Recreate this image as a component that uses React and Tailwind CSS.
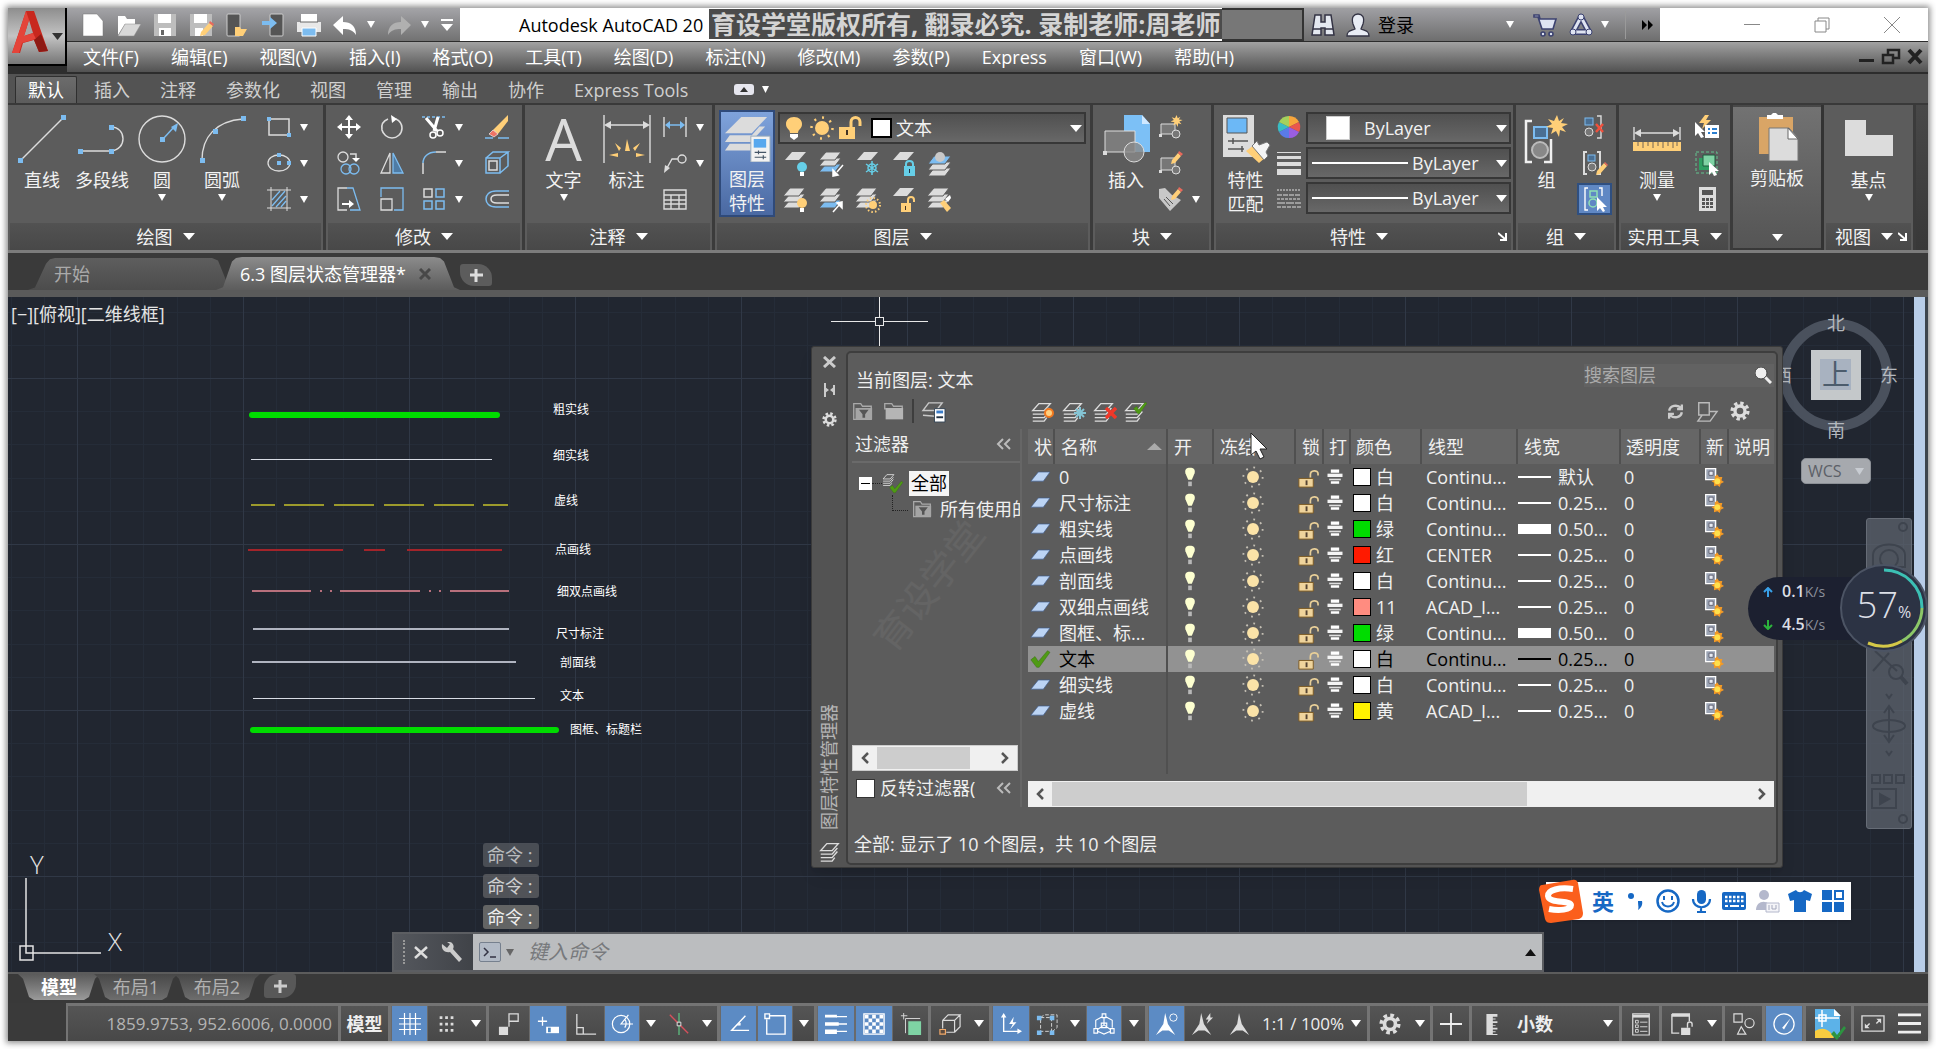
import { useState } from "react";

const W = "#dcdcdc";
const B = "#7cbcf0";
const Y = "#ffcf78";

const sheet = "M9 0h14l-7 8H2z";
const sheets = (
  <g fill={W} stroke="#5c5c5c">
    <path d="M7 12h15l-6 8H0z" />
    <path d="M7 6h15l-6 8H0z" />
    <path d="M7 0h15l-6 8H0z" />
  </g>
);
const sheetsBlue = (
  <g fill={W} stroke="#5c5c5c">
    <path d="M7 12h15l-6 8H0z" fill={B} />
    <path d="M7 6h15l-6 8H0z" />
    <path d="M7 0h15l-6 8H0z" />
  </g>
);
const bracketPair = (
  <>
    <path d="M4 1H1v22h3M14 1h3v22h-3" fill="none" stroke={W} strokeWidth="2" />
    <rect x="5" y="4" width="7" height="6" fill="#4a6f93" stroke={B} />
    <circle cx="9" cy="16" r="4" fill="#777" stroke={W} />
  </>
);
const pencil = (
  <g transform="translate(11 0)">
    <path d="M2 9l6-7 3 3-6 7-4 1z" fill={Y} />
    <path d="M8 2l1-2 4 3-2 2z" fill="#e8695c" />
  </g>
);
const burst = "M12 0l2 6 5-3-3 5 7 1-6 3 4 5-6-2-1 7-3-6-5 3 2-6-7-1 6-3-4-5 6 2z";

const art = {
  // quick access
  newFile: <path d="M2 1h14l6 7v15H2z" fill="#fff" stroke="#777" strokeWidth=".5" />,
  open: <><path d="M1 3h7l2 3h8v5L8 11 1 22z" fill="#fff" /><path d="M8 11h16l-7 12H1z" fill="#d8d8d8" stroke="#8a8a8a" strokeWidth=".5" /></>,
  save: <><path d="M1 1h22v22H1z" fill="#bdbdbd" /><path d="M5 1h13v9H5zM6 15h12v8H6z" fill="#fff" /><path d="M8 17h3v5H8z" fill="#666" /></>,
  saveAs: <><path d="M1 1h22v22H1z" fill="#bdbdbd" /><path d="M5 1h13v9H5zM6 15h8v8H6z" fill="#fff" /><path d="M12 19l8-9 4 3-8 9-5 1z" fill={Y} /><path d="M20 10l1-2 4 3-1 2z" fill="#e8695c" /></>,
  openMobile: <><rect x="2" y="1" width="13" height="22" rx="1" fill="#555" stroke="#ccc" /><path d="M10 14h5l1 2h6l-4 7h-8z" fill={Y} /></>,
  saveMobile: <><rect x="9" y="1" width="13" height="22" rx="1" fill="#555" stroke="#ccc" /><path d="M1 8h8V4l7 6-7 6v-4H1z" fill={B} /></>,
  print: <><path d="M4 1h16v8H4z" fill="#fff" /><path d="M0 9h24v10H0z" fill="#e8e8e8" /><path d="M3 9h18" stroke="#666" /><path d="M5 15h14v8H5z" fill={B} stroke="#fff" /></>,
  undo: <path d="M0 12l10-9v6c8 0 13 4 13 13-3-5-7-6-13-6v6z" fill="#fff" />,
  redo: <path d="M24 12L14 3v6C6 9 1 13 1 22c3-5 7-6 13-6v6z" fill="#b0b0b0" />,
  binoculars: <g fill="#e4e8f0" stroke="#334" strokeWidth="1.5"><path d="M4 2h6v7h4V2h6l3 20h-9v-7h-4v7H1z" /><path d="M2 16h8M14 16h8" /></g>,
  user: <g fill="#e8ecf4" stroke="#334" strokeWidth="1.3"><path d="M1 23c0-5 3-5 8-7l-2-5C5 4 8 1 12 1s7 3 5 10l-2 5c5 2 8 2 8 7z" /></g>,
  cart: <g fill="#dfe4f2" stroke="#3c4270" strokeWidth="1.6"><path d="M1 2h5l1 4h16l-3 10H9L5 4H1z" /><circle cx="10" cy="21" r="2" /><circle cx="18" cy="21" r="2" /></g>,
  app360: <g fill="none" stroke="#3c4270"><path d="M12 4l8 15H4z" strokeWidth="6" strokeLinejoin="round" /><path d="M12 4l8 15H4z" stroke="#dfe4f2" strokeWidth="3" strokeLinejoin="round" /><circle cx="12" cy="4" r="3" fill="#dfe4f2" /><circle cx="4" cy="19" r="3" fill="#dfe4f2" /><circle cx="20" cy="19" r="3" fill="#dfe4f2" /></g>,
  // draw
  rect: <><path d="M2 4h20v16H2z" fill="none" stroke={W} strokeWidth="1.5" /><path d="M0 2h4v4H0zM20 18h4v4h-4z" fill={B} /></>,
  ellipse: <><ellipse cx="12" cy="12" rx="11" ry="8" fill="none" stroke={W} strokeWidth="1.3" /><path d="M10 2h4v4h-4zM10 10h4v4h-4zM20 10h4v4h-4z" fill={B} /></>,
  hatch: <><path d="M5 13l8-9M5 19L18 4M9 20L19 9M14 20l5-6" stroke={B} strokeWidth="1.3" /><path d="M0 3h24M0 21h24M4 0v24M20 0v24" stroke={W} /></>,
  // modify
  move: <path d="M12 0l4 5h-3v6h6V8l5 4-5 4v-3h-6v6h3l-4 5-4-5h3v-6H5v3l-5-4 5-4v3h6V5H8z" fill="#fff" />,
  rotate: <><path d="M8 4C3 6 1 10 2 15c1 4 5 8 10 8s10-4 10-10c0-4-2-7-6-9" fill="none" stroke={W} strokeWidth="1.6" /><path d="M11 0l6 4-5 4z" fill="#fff" /></>,
  trim: <><path d="M0 2h24" stroke={B} strokeWidth="1.5" strokeDasharray="3 2" /><path d="M4 3l11 13M16 2l-4 14" stroke="#fff" strokeWidth="3" /><circle cx="11" cy="20" r="3" fill="none" stroke="#fff" strokeWidth="1.5" /><circle cx="18" cy="18" r="3" fill="none" stroke="#fff" strokeWidth="1.5" /></>,
  erase: <><path d="M23 0L8 15l5 4L23 6z" fill={Y} /><path d="M8 15l5 4-4 3-5-3z" fill="#ef7466" stroke="#fff" strokeWidth=".6" /><path d="M0 23h8M13 23h11" stroke={B} strokeWidth="1.5" /></>,
  copy: <><circle cx="6" cy="6" r="5" fill="none" stroke={W} strokeWidth="1.3" /><path d="M13 3h6v5" fill="none" stroke={W} strokeWidth="1.5" /><path d="M15 7h8l-4 4z" fill="#fff" /><circle cx="9" cy="18" r="5" fill="none" stroke={B} strokeWidth="1.3" /><circle cx="17" cy="18" r="5" fill="none" stroke={B} strokeWidth="1.3" /></>,
  mirror: <><path d="M10 2v20H1z" fill="none" stroke={W} strokeWidth="1.3" /><path d="M13 2v20h10z" fill="#4f7ca5" stroke={B} strokeWidth="1.3" /></>,
  fillet: <><path d="M1 23V12" stroke={W} strokeWidth="1.5" /><path d="M1 12C1 6 6 1 14 1" fill="none" stroke={B} strokeWidth="1.5" /><path d="M14 1h10" stroke={W} strokeWidth="1.5" /></>,
  explode: <><path d="M1 7h14v15H1zM1 7l7-6h15l-8 6M23 1v14l-8 7" fill="none" stroke={B} strokeWidth="1.5" /><path d="M4 10h8v9H4z" fill="none" stroke={W} strokeWidth="1.5" /></>,
  stretch: <><path d="M10 1H1v22h9" fill="none" stroke={W} strokeWidth="1.3" /><path d="M10 1h6l7 22H13" fill="none" stroke={B} strokeWidth="1.3" /><path d="M5 17h7" stroke="#fff" strokeWidth="2" /><path d="M12 13l5 4-5 4z" fill="#fff" /></>,
  scale: <><path d="M1 10V1h22v22H14" fill="none" stroke={B} strokeWidth="1.3" /><path d="M1 12h11v11H1z" fill="none" stroke={W} strokeWidth="1.3" /></>,
  array: <><path d="M2 2h8v8H2z" fill="none" stroke={W} strokeWidth="1.5" /><path d="M14 2h8v8h-8zM2 14h8v8H2zM14 14h8v8h-8z" fill="none" stroke={B} strokeWidth="1.5" /></>,
  offset: <><path d="M24 4H11C4 4 1 8 1 12s3 8 10 8h13" fill="none" stroke={B} strokeWidth="1.5" /><path d="M24 8H12c-4 0-6 2-6 4s2 4 6 4h12" fill="none" stroke={W} strokeWidth="1.5" /></>,
  // annotate
  dimLinear: <><path d="M1 2v20M23 2v20" stroke={W} strokeWidth="1.4" /><path d="M4 10h16" stroke={B} strokeWidth="1.5" /><path d="M2 10l5-4v8zM22 10l-5-4v8z" fill={B} /></>,
  leader: <><circle cx="19" cy="8" r="4" fill="none" stroke={W} strokeWidth="1.4" /><path d="M15 8h-6l-5 9" fill="none" stroke={W} strokeWidth="1.4" /><path d="M1 22l1-8 5 3z" fill={W} /></>,
  table: <path d="M1 3h22v19H1zM1 8h22M1 13h22M1 17h22M8 8v14M16 8v14" fill="none" stroke={W} strokeWidth="1.4" />,
  // layers
  layOff: <><path d={sheet} fill={W} /><circle cx="19" cy="15" r="5" fill="#66cfe8" /><path d="M17 20h4v4h-4z" fill="#fff" /></>,
  layIso: <>{sheetsBlue}<path d="M24 13l-6 7M14 24v-6l5 5z" stroke="#fff" strokeWidth="1.5" fill="#fff" /></>,
  layFreeze: <><path d={sheet} fill={W} /><path d="M17 9v14M11 12l12 8M23 12l-12 8" stroke="#66cfe8" strokeWidth="1.5" /><circle cx="17" cy="16" r="4" fill="none" stroke="#66cfe8" strokeWidth="1.5" /></>,
  layLock: <><path d={sheet} fill={W} /><path d="M13 14h11v10H13z" fill="#66cfe8" /><path d="M15 14v-2c0-4 7-4 7 0v2" fill="none" stroke="#66cfe8" strokeWidth="2" /><path d="M18 17h1v4h-1z" fill="#234" /></>,
  laySet: <><path d="M7 16h17l-6 8H1z" fill={W} stroke="#5c5c5c" /><path d="M7 10h17l-6 8H1z" fill={W} stroke="#5c5c5c" /><path d="M7 4h17l-6 8H1z" fill={B} stroke="#5c5c5c" /><circle cx="13" cy="5" r="5" fill="#c8c8c8" /></>,
  layOn: <>{sheets}<circle cx="19" cy="15" r="5" fill={Y} /><path d="M17 20h4v4h-4z" fill="#fff" /></>,
  layUniso: <>{sheetsBlue}<path d="M14 24l7-8M23 14v6l-5-5z" stroke="#fff" strokeWidth="1.5" fill="#fff" /></>,
  layThaw: <>{sheets}<circle cx="18" cy="17" r="7" fill="none" stroke={Y} strokeWidth="2" strokeDasharray="1.5 2.2" /><circle cx="18" cy="17" r="4" fill={Y} /></>,
  layUnlock: <><path d={sheet} fill={W} /><path d="M10 15h10v9H10z" fill={Y} /><path d="M17 15v-3c0-4 6-4 6 0v2" fill="none" stroke={Y} strokeWidth="2" /><path d="M14 18h1v4h-1z" fill="#432" /></>,
  layMatch: <>{sheets}<path d="M13 15l4-3 7 8-4 4z" fill={Y} /><path d="M18 11l5-4 1 3-3 4z" fill="#fff" /></>,
  bulb: <><path d="M12 1c5 0 8 3 8 7 0 5-4 5-4 9H8c0-4-4-4-4-9 0-4 3-7 8-7z" fill={Y} /><path d="M8 18h8v3l-4 3-4-3z" fill="#fff" /></>,
  sun: <><circle cx="12" cy="12" r="7" fill={Y} /><circle cx="12" cy="12" r="10.500" fill="none" stroke={Y} strokeWidth="2.500" strokeDasharray="2 6.200" /></>,
  unlock: <><path d="M1 11h16v12H1z" fill={Y} /><path d="M13 11V6c0-6 9-6 9 0v4" fill="none" stroke={Y} strokeWidth="3" /><path d="M8 14h2v5H8z" fill="#432" /></>,
  // block
  blkNew: <><path d="M2 9h14v10H2z" fill="#777" stroke={W} /><circle cx="17" cy="19" r="4" fill="#777" stroke={W} /><path d="M0 19h3v3H0z" fill={W} /><g transform="translate(11 0) scale(.55)"><path d={burst} fill={Y} /></g></>,
  blkEdit: <><path d="M2 7h14v12H2z" fill="#777" stroke={W} /><circle cx="17" cy="19" r="4" fill="#777" stroke={W} /><path d="M0 19h3v3H0z" fill={W} />{pencil}</>,
  tag: <><path d="M0 2l6-1 7 7 9 5-11 11L0 11z" fill="#c8c8c8" /><path d="M7 10l7 7M5 12l6 7" stroke="#555" />{pencil}</>,
  wheel: <><path d="M12 12V1a11 11 0 0 1 10 6z" fill="#f7a63c" /><path d="M12 12l10-5a11 11 0 0 1 0 10z" fill="#e9574d" /><path d="M12 12l10 5a11 11 0 0 1-10 6z" fill="#9a5ee0" /><path d="M12 12v11a11 11 0 0 1-10-6z" fill="#5a7be8" /><path d="M12 12L2 17a11 11 0 0 1 0-10z" fill="#38bcc4" /><path d="M12 12L2 7a11 11 0 0 1 10-6z" fill="#a4d15c" /></>,
  weights: <path d="M0 1h24v1H0zM0 5h24v3H0zM0 11h24v4H0zM0 18h24v6H0z" fill={W} />,
  dashes: <g stroke={W} strokeWidth="1.200"><path d="M0 3h24" strokeDasharray="2 1" /><path d="M0 8h24" strokeDasharray="5 1" /><path d="M0 12h24" strokeDasharray="3 1" /><path d="M0 16h24" strokeDasharray="8 1" /><path d="M0 20h24" strokeDasharray="4 1" /></g>,
  // groups
  ungroup: <><path d="M14 1h4v22h-4" fill="none" stroke={W} strokeWidth="1.400" /><rect x="2" y="3" width="8" height="7" fill="#4a6f93" stroke={B} /><circle cx="6" cy="17" r="4" fill="#777" stroke={W} /><path d="M13 9l7 8M20 9l-7 8" stroke="#f0503c" strokeWidth="2.500" /></>,
  groupEdit: <>{bracketPair}<path d="M13 24l1-4 7-8 3 3-7 8z" fill={Y} /><path d="M21 12l1-1 3 3-1 1z" fill="#e8695c" /></>,
  groupSel: <><path d="M5 1H2v22h3M16 1h3v8" fill="none" stroke="#fff" strokeWidth="1.400" /><rect x="7" y="4" width="7" height="6" fill="none" stroke="#8fe0b4" strokeWidth="1.500" /><circle cx="10" cy="16" r="4" fill="none" stroke="#8fe0b4" strokeWidth="1.500" /><path d="M14 10v14l3-3 3 4 2-1-2-4h4z" fill="#fff" /></>,
  quick: <><path d="M10 0L4 8h5l-2 6 9-9h-5l3-5z" fill={Y} /><path d="M10 10h14v13H10z" fill="#fff" /><path d="M13 13h2v2h-2zM13 17h2v2h-2zM17 13h5v2h-5zM17 17h5v2h-5z" fill="#2b7fd0" /><path d="M0 7v14l3-3 3 5 3-1-3-5h4z" fill="#fff" /></>,
  selAll: <><path d="M1 1h21v21H1z" fill="none" stroke="#63c58f" strokeDasharray="3 2" /><path d="M4 7h12v12H4z" fill="#2f9f62" /><path d="M8 4h12v11H8z" fill="#7fd3a4" stroke="#1f5a3c" /><path d="M14 11v13l3-3 2 4 3-1-2-4h4z" fill="#fff" /></>,
  calc: <><path d="M4 0h17v24H4z" fill={W} /><path d="M7 3h11v5H7z" fill="#555" /><path d="M7 11h3v3H7zM11 11h3v3h-3zM15 11h3v3h-3zM7 15h3v3H7zM11 15h3v3h-3zM15 15h3v3h-3zM7 19h3v2H7zM11 19h3v2h-3zM15 19h3v2h-3z" fill="#555" /></>,
  // palette
  folder: <><path d="M2 3h8l2 3h10v3H2z" fill="none" stroke="#aaa" strokeWidth="1.500" /><path d="M3 8h20v13H3z" fill="#b5b5b5" /></>,
  folderFilter: <><path d="M2 3h8l2 3h10v15H2z" fill="none" stroke="#aaa" strokeWidth="1.500" /><path d="M4 8h19v13H4z" fill="#a5a5a5" /><path d="M8 10h11l-4 5v4h-3v-4z" fill="#555" /></>,
  layState: <><path d="M7 3h14l-6 8H1zM1 16l13 1 4-4" fill="none" stroke="#c8c8c8" strokeWidth="1.500" /><path d="M13 9h11v14H13z" fill="#fff" stroke="#345" /><path d="M15 11h7v3h-7z" fill="#3a7cc8" /><path d="M15 18h7" stroke="#234" strokeWidth="2" /></>,
  stackLines: <g fill="none" stroke="#ddd" strokeWidth="1.600"><path d="M9 3h13l-7 8H2zM2 15h13l6-7M2 19h13l6-7M2 23h13l3-4" /></g>,
  refresh: <path d="M4 11c1-6 10-9 15-3M20 3v6h-6M20 13c-1 6-10 9-15 3M4 21v-6h6" fill="none" stroke="#ccc" strokeWidth="3" />,
  override: <path d="M2 2h12v14H2zM14 12h9l-8 11H1l5-7" fill="none" stroke="#bbb" strokeWidth="1.600" />,
  gear: <><circle cx="12" cy="12" r="6" fill="none" stroke="#ddd" strokeWidth="4" /><circle cx="12" cy="12" r="9.500" fill="none" stroke="#ddd" strokeWidth="4" strokeDasharray="4 3.460" /></>,
  // row glyphs
  layerRow: <path d="M10 6h14l-8 11H1z" fill="#bcd4f4" stroke="#3c5a8c" strokeWidth=".8" />,
  check: <path d="M1 13l5-4 4 6L21 2l3 2-13 18H8z" fill="#4f9a14" stroke="#2f640a" strokeWidth=".5" />,
  rowBulb: <><path d="M12 2c4 0 6 2 5 6l-3 7h-4L7 8c-1-4 1-6 5-6z" fill="#fdffd0" /><path d="M10 17h4v5h-4z" fill="#b8b8b8" /></>,
  rowSun: <><circle cx="12" cy="12" r="6.500" fill="#fbe3a8" /><circle cx="12" cy="12" r="10.500" fill="none" stroke="#c4bfb4" strokeWidth="2" strokeDasharray="2 6.250" /></>,
  rowLock: <><path d="M3 13h15v9H3z" fill="#efd49c" stroke="#7c5a24" /><path d="M15 12V9c0-5 8-5 8-1v2" fill="none" stroke="#e8cf98" strokeWidth="1.800" /><path d="M10 15h2v5h-2z" fill="#543" /></>,
  rowPrint: <><path d="M7 3h10v4H7zM7 17h10v3H7z" fill="#fff" /><path d="M3 8h18v4H3z" fill="#f4f4f4" /><path d="M5 14h14v2H5z" fill="#ddd" /></>,
  rowVp: <><path d="M2 2h12v13H2z" fill="#9ba4b4" stroke="#fff" strokeWidth="1.500" /><path d="M6 5h5v5H6z" fill="#e8ecf4" stroke="#556" /><path d="M16 9l2 3 4 0-1 4 3 2-4 2-1 4-3-2-4 1 0-4-3-2 4-2 0-4z" fill="#f39a26" /><circle cx="16" cy="17" r="3.500" fill="#ffe04c" /></>,
  // status bar
  grid: <path d="M6 0v24M12 0v24M18 0v24M0 6h24M0 12h24M0 18h24" stroke="#fff" strokeWidth="1.300" />,
  dots: <path d="M4 5h15M4 12h15M4 19h15" stroke={W} strokeWidth="3" strokeDasharray="3 3" />,
  infer: <><path d="M1 15h10v9H1z" fill={W} /><path d="M12 1h10v8H12zM12 9v6" fill="none" stroke={W} strokeWidth="1.400" /></>,
  dyn: <><path d="M6 4v10M1 9h10" stroke="#fff" strokeWidth="1.400" /><path d="M10 15h14v7H10z" fill="#fff" /><path d="M12 16h3v5h-3z" fill="#4d86c0" /></>,
  ortho: <path d="M2 1v22h21M2 16h7v7" fill="none" stroke={W} strokeWidth="1.400" />,
  polar: <><circle cx="11" cy="12" r="9.500" fill="none" stroke="#fff" strokeWidth="1.300" /><path d="M19 2l-8 10h13M15 7c2 2 2 6 0 9" fill="none" stroke="#fff" strokeWidth="1.300" /></>,
  iso: <><path d="M2 2l20 20" stroke="#d8505c" strokeWidth="1.500" /><path d="M12 0v24" stroke="#5cb87c" strokeWidth="1.500" /><path d="M10 10h4v4h-4z" fill="#444" stroke="#eee" /></>,
  track: <path d="M19 3L4 19h19M9 13h4v-2" fill="none" stroke="#fff" strokeWidth="1.500" />,
  osnap: <path d="M6 3h17v20H3V7M1 1h5v5H1z" fill="none" stroke="#fff" strokeWidth="1.500" />,
  lwt: <><path d="M12 4h12M12 12h12M12 20h12" stroke="#fff" strokeWidth="1.500" /><path d="M0 2h13v3H0zM0 10h15v4H0zM0 18h13v5H0z" fill="#fff" /></>,
  checker: <><path d="M1 1h22v22H1z" fill="none" stroke="#fff" strokeWidth="1.500" /><path d="M2 2h4v4H2zM10 2h4v4h-4zM18 2h4v4h-4zM6 6h4v4H6zM14 6h4v4h-4zM2 10h4v4H2zM10 10h4v4h-4zM18 10h4v4h-4zM6 14h4v4H6zM14 14h4v4h-4zM2 18h4v4H2zM10 18h4v4h-4zM18 18h4v4h-4z" fill="#fff" /></>,
  cycle: <><path d="M4 0v7M1 3h7M6 22V6h16" fill="none" stroke={W} /><path d="M9 9h14v15H9z" fill="#7fd3a4" /></>,
  cube3: <><path d="M4 8h13v13H8M4 8v9M4 8l6-6h13l-6 6M23 2v13l-6 6" fill="none" stroke={W} strokeWidth="1.300" /><path d="M1 18h6v5H1z" fill="#5a4a3e" stroke="#f0a868" strokeWidth="1.300" /></>,
  ucs: <><path d="M4 2v18h18" fill="none" stroke="#fff" strokeWidth="1.500" /><path d="M1 5l3-5 3 5zM19 17l5 3-5 3zM15 4l-5 8h4l-3 6 7-8h-4z" fill="#fff" /></>,
  subobj: <><path d="M5 5h12v15H5zM5 5l4-3h14v14l-5 4" fill="none" stroke={W} strokeDasharray="4 2" /><path d="M1 3h5v5H1zM15 3h5v5h-5zM1 19h5v5H1zM15 19h5v5h-5z" fill={B} /></>,
  gizmo: <path d="M10 1h4v4h-4zM1 17h4v5H1zM19 17h4v5h-4zM12 5v8M12 13l-7 5M12 13l7 5M3 16V8l7-4M21 16V8l-7-4M5 20l7 3 7-3M9 11h6v5H9z" fill="none" stroke="#fff" strokeWidth="1.200" />,
  annoA: <><path d="M10 0l3 12 8 12-7-5H7l-7 5 8-12z" fill="#fff" /><circle cx="19" cy="5" r="4" fill="none" stroke="#fff" /></>,
  annoB: <><path d="M10 0l3 12 8 12-7-5H7l-7 5 8-12z" fill={W} /><path d="M20 0l-5 7h3l-2 5 7-7h-3z" fill={W} /></>,
  annoC: <path d="M12 0l3 12 8 12-7-5H9l-7 5 8-12z" fill={W} />,
  plus: <path d="M12 0v24M0 12h24" stroke="#eee" strokeWidth="2" />,
  ruler: <path d="M7 1h12v3h-5v2h3v1h-3v2h5v2h-5v2h3v1h-3v2h5v2h-5v2h3v1h-3v2h5v1H7z" fill={W} />,
  list: <><path d="M3 1h18v23H3z" fill="none" stroke={W} strokeWidth="1.300" /><path d="M3 2h18v3H3z" fill={W} /><path d="M6 8h3v3H6zM6 13h3v3H6zM6 18h3v3H6zM11 10h8M11 15h8M11 20h8" fill="none" stroke={W} /></>,
  winLock: <><path d="M1 1h19v8M1 1v21h8" fill="none" stroke={W} strokeWidth="1.500" /><path d="M1 1h19v3H1zM11 16h10v8H11z" fill={W} /><path d="M18 16v-4c0-3 5-3 5 0v3" fill="none" stroke={W} strokeWidth="1.500" /></>,
  shapes: <><path d="M1 1h9v9H1zM9 15l5 8H5z" fill="none" stroke={W} strokeWidth="1.300" /><circle cx="18" cy="11" r="5" fill="none" stroke={W} strokeWidth="1.300" /></>,
  gauge: <><circle cx="12" cy="12" r="11" fill="none" stroke="#fff" strokeWidth="1.400" /><path d="M19 6l-7 12-2-2z" fill="#fff" /></>,
  full: <><path d="M1 4h23v16H1z" fill="none" stroke={W} strokeWidth="1.400" /><path d="M16 7h5v5zM4 12v5h5z" fill={W} /><path d="M20 8l-4 4M5 16l4-4" stroke={W} strokeWidth="1.500" /></>,
  menu: <path d="M0 3h24M0 12h24M0 21h24" stroke="#eee" strokeWidth="3" />,
  // ime
  smile: <><circle cx="12" cy="12" r="10.500" fill="none" stroke="#1668c4" strokeWidth="2.500" /><path d="M8 7v4M16 7v4" stroke="#1668c4" strokeWidth="2" /><path d="M6 13c2 6 10 6 12 0" fill="none" stroke="#1668c4" strokeWidth="2" /></>,
  mic: <><rect x="8" y="1" width="9" height="14" rx="4.500" fill="#1668c4" /><path d="M4 10c0 11 17 11 17 0M12 18v5M8 23h9" fill="none" stroke="#1668c4" strokeWidth="2.200" /></>,
  keyboard: <><rect x="0" y="3" width="24" height="18" rx="2" fill="#1668c4" /><path d="M3 8h19M3 12h19" stroke="#fff" strokeWidth="2.500" strokeDasharray="2.500 1.500" /><path d="M3 17h3M8 17h9M19 17h3" stroke="#fff" strokeWidth="2" /></>,
  person: <><circle cx="9" cy="6" r="5" fill="#b4b8cc" /><path d="M1 21c0-11 15-11 15 0z" fill="#b4b8cc" /><path d="M11 14h13v9H11z" fill="#f4f4f8" stroke="#b4b8cc" /><path d="M14 16v5M17 16v4h4v-4" stroke="#a4a8bc" fill="none" /></>,
  shirt: <path d="M8 1c2 3 6 3 8 0l8 4-2 7-4-1v12H6V11l-4 1-2-7z" fill="#1668c4" />,
  apps: <><path d="M1 1h10v10H1zM1 13h10v10H1zM13 13h10v10H13z" fill="#1668c4" /><path d="M14 2h8v8h-8z" fill="none" stroke="#1668c4" strokeWidth="2" /></>,
};

const bigArt = {
  line: <><path d="M2 46L46 2" stroke={W} strokeWidth="1.400" /><path d="M0 43h5v5H0zM43 0h5v5h-5z" fill={B} /></>,
  pline: <><path d="M3 36h30c16-1 16-24 0-24" fill="none" stroke={W} strokeWidth="1.400" /><path d="M0 34h5v5H0zM31 34h5v5h-5zM31 10h5v5h-5z" fill={B} /></>,
  circle: <><circle cx="24" cy="24" r="23" fill="none" stroke={W} strokeWidth="1.400" /><path d="M22 22h5v5h-5zM40 8l-2 9-5-5z" fill={B} /><path d="M25 24l11-12" stroke={B} strokeWidth="1.500" /></>,
  arc: <><path d="M4 45C4 22 18 6 45 4" fill="none" stroke={W} strokeWidth="1.400" /><path d="M2 43h5v5H2zM15 14h5v5h-5zM43 1h5v5h-5z" fill={B} /></>,
  dim: <><path d="M1 0v48M47 0v48M4 10h40" stroke={W} strokeWidth="1.400" /><path d="M1 10l7-4v8zM47 10l-7-4v8z" fill={W} /><path d="M22 36l2-12 3 12zM12 28l6 5-2 3zM37 28l-7 5 2 3zM6 40l9-2v4zM42 40l-9-2v4z" fill={Y} /></>,
  layProps: <><g fill={W}><path d="M18 1h27L29 18H1z" /><path d="M6 20h23l8-9h6L28 27H1zM6 29h23l6-7h6L28 36H1z" /></g><path d="M28 21h20v27H28z" fill="#f2f2f2" stroke="#9ab" /><path d="M31 24h13v9H31z" fill="#58a8ee" /><path d="M32 38h12M32 43h12M36 36v4M41 41v4" stroke="#456" strokeWidth="1.200" /></>,
  insert: <><path d="M22 0h18l8 9v28H22z" fill="#7cc0f6" /><path d="M40 0v9h8" fill="#cfe8ff" /><path d="M3 16h30v21H3z" fill="#7c7c7c" stroke={W} /><circle cx="32" cy="37" r="10" fill="#8a8a8a" fillOpacity=".8" stroke={W} /><path d="M1 36h4v4H1z" fill={W} /></>,
  matchProp: <><path d="M1 0h31v42H1z" fill={W} /><path d="M5 3h20v15H5z" fill="#6cb8f6" stroke="#555" /><path d="M6 26h20M6 34h16M11 23v6M20 31v6" stroke="#555" strokeWidth="1.500" /><path d="M24 36l8-6 12 12-7 6z" fill={Y} /><path d="M30 31l5-5 2 4 8-3 3 3-4 7 2 4-4 4z" fill="#f4f4f4" stroke="#777" /></>,
  group: <><path d="M9 6H3v41h6M28 24v23h-7" fill="none" stroke="#f0f0f0" strokeWidth="2.500" /><path d="M11 12h13v11H11z" fill="#4a6f93" stroke={B} strokeWidth="2" /><circle cx="17" cy="35" r="8" fill="#888" stroke="#bbb" strokeWidth="2" /><g transform="translate(22 0)"><path d={burst} fill={Y} /></g></>,
  measure: <><path d="M1 12v13M47 12v13M4 18h40" stroke={W} strokeWidth="1.400" /><path d="M1 18l7-4v8zM47 18l-7-4v8z" fill={W} /><path d="M0 27h48v9H0z" fill={Y} /><path d="M5 27v4M10 27v6M15 27v4M20 27v6M25 27v4M30 27v6M35 27v4M40 27v6M44 27v4" stroke="#765" /></>,
  clipboard: <><path d="M6 4h34v37H6z" fill="#d9a566" /><path d="M14 6h16V2h-5l-2-2h-3l-2 2h-4z" fill="#fff" /><path d="M16 15h20l9 10v23H16z" fill={W} stroke="#777" /><path d="M35 15v11h10z" fill="#fff" stroke="#666" /></>,
  base: <path d="M0 5h21v15h27v21H0z" fill={W} />,
};

function Icon({ name, s = 24 }) {
  return (
    <svg width={s} height={s} viewBox="0 0 24 24" className="shrink-0 overflow-visible" aria-hidden="true">
      {art[name]}
    </svg>
  );
}

function Caret({ w = 10, up = false, fill = "#fff" }) {
  return (
    <svg width={w} height="7" viewBox="0 0 10 7" preserveAspectRatio="none" className="shrink-0" aria-hidden="true">
      <path d={up ? "M0 7h10L5 0z" : "M0 0h10L5 7z"} fill={fill} />
    </svg>
  );
}

function BigButton({ icon, label, caret, w = "w-[60px]", children }) {
  return (
    <button className={`flex flex-col items-center ${w} pt-[10px] leading-6`}>
      {children || (
        <svg width="48" height="48" viewBox="0 0 48 48" className="overflow-visible" aria-hidden="true">
          {bigArt[icon]}
        </svg>
      )}
      <span className="mt-[5px] whitespace-pre-line">{label}</span>
      {caret && <span className="pt-[2px]"><Caret w={8} /></span>}
    </button>
  );
}

function SmallButton({ icon, caret, active }) {
  return (
    <button aria-label={icon} className="flex h-9 items-center gap-[9px]">
      <span className={active ? "flex h-8 w-[35px] items-center justify-center border-2 border-[#2f4f80] bg-[#6088c4]" : "flex"}>
        <Icon name={icon} />
      </span>
      {caret && <Caret w={8} />}
    </button>
  );
}

function Panel({ title, w, launcher, children }) {
  return (
    <section className={`flex flex-col ${w} shrink-0 border-r-[3px] border-[#3b3b3b] bg-[#5c5c5c]`}>
      <div className="flex h-[118px]">{children}</div>
      <div className="mx-[2px] flex flex-1 items-center bg-gradient-to-b from-[#525252] to-[#484848] px-1">
        <button className="flex flex-1 items-center justify-center gap-[10px] whitespace-nowrap">
          {title}
          <Caret w={12} />
        </button>
        {launcher && (
          <svg width="9" height="9" viewBox="0 0 9 9" aria-hidden="true">
            <path d="M0 1l7 6M8 1v7H2" fill="none" stroke="#fff" strokeWidth="2" />
          </svg>
        )}
      </div>
    </section>
  );
}

function PropSelect({ label, swatch }) {
  return (
    <div className="flex h-8 items-center border-2 border-[#373737] bg-gradient-to-b from-[#505050] to-[#686868] pr-[2px]">
      {swatch ? (
        <span className="ml-[18px] h-6 w-6 border border-[#ccc] bg-white" />
      ) : (
        <span className="ml-1 h-[2px] w-24 bg-white" />
      )}
      <select aria-label={label} className={swatch ? "ml-[14px] w-0 flex-1 appearance-none outline-none" : "ml-1 w-0 flex-1 appearance-none outline-none"}>
        <option>ByLayer</option>
      </select>
      <Caret w={11} />
    </div>
  );
}

const menus = ["文件(F)", "编辑(E)", "视图(V)", "插入(I)", "格式(O)", "工具(T)", "绘图(D)", "标注(N)", "修改(M)", "参数(P)", "Express", "窗口(W)", "帮助(H)"];
const ribbonTabs = ["插入", "注释", "参数化", "视图", "管理", "输出", "协作", "Express Tools"];

function TitleBar() {
  return (
    <header className="flex bg-[#2e2e2e]">
      <button aria-label="应用程序菜单" className="flex h-[58px] w-[59px] items-center gap-1 border-r-2 border-b-2 border-black bg-gradient-to-b from-[#8e8e8e] via-[#c4c4c4] to-[#777] pl-1">
        <svg width="36" height="42" viewBox="0 0 36 42" className="mb-2" aria-hidden="true">
          <path d="M14 0h8l14 40-9 1-5-12-11 3-3 10H0z" fill="#c8281e" />
          <path d="M17 9l-5 16 9-3z" fill="#a8a8a8" />
          <path d="M14 0l3 9-5 16 9-3 3 6-14 4-3 10H0z" fill="#e4443a" />
          <path d="M22 29l5 12 9-1-7-17z" fill="#8e1a14" />
        </svg>
        <Caret w={11} fill="#333" />
      </button>
      <div className="min-w-0 flex-1">
        <div className="flex h-[34px] border-b border-[#2c2c2c] bg-gradient-to-b from-[#a4a4a8] to-[#727272]">
          <div className="flex w-[393px] shrink-0 items-center gap-3 pl-[14px]">
            {["newFile", "open", "save", "saveAs", "openMobile", "saveMobile", "print"].map((n) => (
              <button key={n} aria-label={n}><Icon name={n} /></button>
            ))}
            <button aria-label="undo" className="flex items-center gap-[10px]"><Icon name="undo" /><Caret w={8} /></button>
            <button aria-label="redo" className="flex items-center gap-[10px]"><Icon name="redo" /><Caret w={8} /></button>
            <button aria-label="自定义" className="flex flex-col items-center gap-[3px]">
              <span className="h-[2px] w-3 bg-white" />
              <Caret w={12} />
            </button>
          </div>
          <div className="flex min-w-0 flex-1 bg-white">
            <h1 className="w-[249px] pl-[59px] leading-[34px] whitespace-nowrap text-black">Autodesk AutoCAD 20</h1>
            <div className="my-[1px] flex h-[30px] shrink-0 items-center bg-[#4b4b4b] px-[2px] text-[25px] font-bold whitespace-pre text-[#d4d4d4]">
              育设学堂版权所有, 翻录必究. 录制老师:周老师
            </div>
            <div className="flex-1 border-2 border-l-0 border-[#333] bg-[#777]" />
          </div>
          <div className="flex w-[356px] shrink-0 items-center bg-gradient-to-b from-[#a0a0a4] to-[#6e6e6e] pl-[7px]">
            <button aria-label="搜索"><Icon name="binoculars" /></button>
            <button className="ml-[11px] flex items-center gap-[8px]"><Icon name="user" />登录</button>
            <span className="ml-[92px]"><Caret w={8} /></span>
            <button aria-label="购物" className="ml-[19px]"><Icon name="cart" /></button>
            <button aria-label="应用" className="ml-3 flex items-center gap-2"><Icon name="app360" /><Caret w={8} /></button>
            <span className="ml-4 h-7 w-px bg-[#9a9a9a]" />
            <svg width="11" height="10" viewBox="0 0 11 10" className="ml-4" aria-hidden="true">
              <path d="M0 0l5 5-5 5zM6 0l5 5-5 5z" fill="#000" />
            </svg>
          </div>
          <div className="flex w-[268px] shrink-0 items-center justify-end gap-[54px] bg-white pr-[28px]">
            <button aria-label="最小化" className="h-px w-4 bg-[#888]" />
            <button aria-label="还原">
              <svg width="16" height="16" viewBox="0 0 16 16" aria-hidden="true"><path d="M1 4h11v11H1zM4 4V1h11v11h-3" fill="none" stroke="#888" /></svg>
            </button>
            <button aria-label="关闭">
              <svg width="16" height="16" viewBox="0 0 16 16" aria-hidden="true"><path d="M0 0l16 16M16 0L0 16" stroke="#888" /></svg>
            </button>
          </div>
        </div>
        <nav className="flex h-[32px] items-center gap-8 border-b-2 border-[#2c2c2c] bg-gradient-to-b from-[#a2a2a2] to-[#525252] pl-4 text-white">
          {menus.map((m) => (
            <button key={m} className="leading-6 whitespace-nowrap">{m}</button>
          ))}
          <div className="ml-auto flex items-center gap-[9px] pr-[5px]">
            <svg width="64" height="18" viewBox="0 0 64 18" aria-hidden="true">
              <path d="M0 11h15v3H0z" fill="#222" />
              <path d="M24 7h10v8H24zM29 6V2h11v8h-5" fill="none" stroke="#222" strokeWidth="2.500" />
              <path d="M50 2l12 13M62 2L50 15" stroke="#222" strokeWidth="4" />
            </svg>
          </div>
        </nav>
      </div>
    </header>
  );
}

function Ribbon() {
  return (
    <>
      <div className="flex h-[31px] items-end border-b-2 border-[#393939] bg-[#535353] pl-[7px] text-[#cfcfcf]">
        <button className="h-[27px] rounded-t-[2px] border border-b-0 border-[#2f2f2f] bg-gradient-to-b from-[#6c6c6c] to-[#5c5c5c] px-[12px] text-white">默认</button>
        <div className="ml-[17px] flex h-[27px] items-center gap-[30px]">
          {ribbonTabs.map((t) => (
            <button key={t} className="whitespace-nowrap">{t}</button>
          ))}
        </div>
        <button aria-label="最小化功能区" className="ml-[46px] flex h-[27px] items-center gap-2">
          <svg width="20" height="11" viewBox="0 0 20 11" aria-hidden="true">
            <rect width="20" height="11" rx="3" fill="#e6e6ee" />
            <path d="M6 8h8l-4-5z" fill="#333" />
          </svg>
          <Caret w={7} />
        </button>
      </div>
      <div className="flex h-[145px] bg-gradient-to-b from-[#484848] to-[#383838] text-[#f2f2f2]">
        <Panel title="绘图" w="w-[318px]">
          <div className="flex pl-1">
            <BigButton icon="line" label="直线" />
            <BigButton icon="pline" label="多段线" />
            <BigButton icon="circle" label="圆" caret />
            <BigButton icon="arc" label="圆弧" caret />
          </div>
          <div className="ml-[15px] pt-1">
            <SmallButton icon="rect" caret />
            <SmallButton icon="ellipse" caret />
            <SmallButton icon="hatch" caret />
          </div>
        </Panel>
        <Panel title="修改" w="w-[199px]">
          <div className="grid grid-cols-[43px_42px_63px_43px] content-start pt-1 pl-[11px]">
            <SmallButton icon="move" />
            <SmallButton icon="rotate" />
            <SmallButton icon="trim" caret />
            <SmallButton icon="erase" />
            <SmallButton icon="copy" />
            <SmallButton icon="mirror" />
            <SmallButton icon="fillet" caret />
            <SmallButton icon="explode" />
            <SmallButton icon="stretch" />
            <SmallButton icon="scale" />
            <SmallButton icon="array" caret />
            <SmallButton icon="offset" />
          </div>
        </Panel>
        <Panel title="注释" w="w-[190px]">
          <div className="flex pl-[7px]">
            <BigButton label="文字" caret w="w-[63px]">
              <span className="h-12 text-[58px] leading-[48px] text-[#dcdcdc]">A</span>
            </BigButton>
            <BigButton icon="dim" label="标注" w="w-[63px]" />
          </div>
          <div className="ml-[5px] pt-1">
            <SmallButton icon="dimLinear" caret />
            <SmallButton icon="leader" caret />
            <SmallButton icon="table" />
          </div>
        </Panel>
        <Panel title="图层" w="w-[378px]">
          <button className="mt-[5px] ml-1 flex h-[107px] w-[56px] flex-col items-center border-2 border-[#2f4a7a] bg-gradient-to-b from-[#7fa3dc] to-[#4a69a2] pt-1 leading-6">
            <svg width="48" height="48" viewBox="0 0 48 48" aria-hidden="true">{bigArt.layProps}</svg>
            <span className="mt-[5px] leading-6">图层<br />特性</span>
          </button>
          <div className="ml-[3px] flex-1 pt-[7px] pr-1">
            <div className="flex h-8 items-center gap-1 border-2 border-[#373737] bg-gradient-to-b from-[#505050] to-[#686868] pr-[2px] pl-[2px]">
              <Icon name="bulb" />
              <Icon name="sun" />
              <Icon name="unlock" />
              <span className="ml-[5px] h-5 w-[21px] border-2 border-black bg-white" />
              <select aria-label="图层" className="w-0 flex-1 appearance-none outline-none">
                <option>文本</option>
              </select>
              <Caret w={12} />
            </div>
            <div className="mt-[2px] grid grid-cols-[36px_36px_36px_36px_36px] pl-[5px]">
              {["layOff", "layIso", "layFreeze", "layLock", "laySet", "layOn", "layUniso", "layThaw", "layUnlock", "layMatch"].map((n) => (
                <SmallButton key={n} icon={n} />
              ))}
            </div>
          </div>
        </Panel>
        <Panel title="块" w="w-[121px]">
          <BigButton icon="insert" label="插入" w="w-[66px]" />
          <div className="pt-1">
            <SmallButton icon="blkNew" />
            <SmallButton icon="blkEdit" />
            <SmallButton icon="tag" caret />
          </div>
        </Panel>
        <Panel title="特性" w="w-[302px]" launcher>
          <BigButton icon="matchProp" label={"特性\n匹配"} w="w-[63px]" />
          <div className="pt-1">
            <SmallButton icon="wheel" />
            <SmallButton icon="weights" />
            <SmallButton icon="dashes" />
          </div>
          <div className="ml-[5px] flex flex-1 flex-col gap-[3px] pt-[7px] pr-[2px]">
            <PropSelect label="颜色" swatch />
            <PropSelect label="线宽" />
            <PropSelect label="线型" />
          </div>
        </Panel>
        <Panel title="组" w="w-[103px]">
          <BigButton icon="group" label="组" w="w-[61px]" />
          <div className="flex flex-col items-center pt-1">
            <SmallButton icon="ungroup" />
            <SmallButton icon="groupEdit" />
            <SmallButton icon="groupSel" active />
          </div>
        </Panel>
        <Panel title="实用工具" w="w-[114px]">
          <BigButton icon="measure" label="测量" caret w="w-[76px]" />
          <div className="pt-1">
            <SmallButton icon="quick" />
            <SmallButton icon="selAll" />
            <SmallButton icon="calc" />
          </div>
        </Panel>
        <button className="my-[2px] flex w-[88px] shrink-0 flex-col items-center bg-gradient-to-b from-[#727272] to-[#555] pt-[6px] leading-6">
          <svg width="48" height="48" viewBox="0 0 48 48" aria-hidden="true">{bigArt.clipboard}</svg>
          <span className="mt-[5px]">剪贴板</span>
          <span className="mt-auto pb-[7px]"><Caret w={11} /></span>
        </button>
        <span className="w-[3px] bg-[#333]" />
        <Panel title="视图" w="w-[92px]" launcher>
          <BigButton icon="base" label="基点" caret w="w-[92px]" />
        </Panel>
      </div>
    </>
  );
}

function FileTabs() {
  return (
    <div className="flex h-[47px] shrink-0 items-end border-t-[3px] border-b-[7px] border-t-[#7c7c7c] border-b-[#5a5a5a] bg-[#3a3a3a] pl-5">
      <button className="-mr-4 h-8 w-[204px] bg-gradient-to-b from-[#5e5e5e] to-[#4c4c4c] pl-[26px] text-left text-[#aaa] [clip-path:polygon(0_100%,7px_92%,18px_18%,22px_4%,27px_0,calc(100%-20px)_0,calc(100%-14px)_8%,calc(100%-4px)_85%,100%_100%)]">开始</button>
      <div className="z-10 flex h-[33px] w-[244px] items-center bg-gradient-to-b from-[#8c8c8c] to-[#5c5c5c] pl-[24px] text-white [clip-path:polygon(0_100%,7px_92%,16px_14%,20px_3%,26px_0,calc(100%-26px)_0,calc(100%-20px)_3%,calc(100%-16px)_14%,calc(100%-6px)_92%,100%_100%)]">
        <button className="whitespace-nowrap">6.3 图层状态管理器*</button>
        <button aria-label="关闭" className="ml-[13px]">
          <svg width="12" height="12" viewBox="0 0 12 12" aria-hidden="true"><path d="M1 1l10 10M11 1L1 11" stroke="#484848" strokeWidth="3" /></svg>
        </button>
      </div>
      <button aria-label="新建" className="mb-1 flex h-[22px] w-8 items-center justify-center rounded-tl-[3px] rounded-tr-[14px] rounded-br-[3px] rounded-bl-[14px] bg-[#5c5c5c]">
        <svg width="13" height="13" viewBox="0 0 13 13" aria-hidden="true"><path d="M6 0v13M0 6h13" stroke="#ddd" strokeWidth="3" /></svg>
      </button>
    </div>
  );
}

const strokes = [
  { y: 118, c: "#00dc00", w: 6, parts: [[244, 489]], label: "粗实线", lx: 545, ly: 117 },
  { y: 162, c: "#d8dce4", w: 1, parts: [[243, 484]], label: "细实线", lx: 545, ly: 163 },
  { y: 208, c: "#9c9a2c", w: 2, parts: [[243, 267], [276, 316], [326, 366], [376, 416], [426, 466], [475, 500]], label: "虚线", lx: 546, ly: 208 },
  { y: 253, c: "#a3242a", w: 2, parts: [[240, 335], [356, 377], [399, 494]], label: "点画线", lx: 547, ly: 257 },
  { y: 294, c: "#b8707c", w: 2, parts: [[244, 303], [312, 314], [322, 324], [332, 412], [421, 423], [431, 433], [442, 501]], label: "细双点画线", lx: 549, ly: 299 },
  { y: 332, c: "#b0b4c0", w: 2, parts: [[245, 501]], label: "尺寸标注", lx: 548, ly: 341 },
  { y: 365, c: "#b0b4c0", w: 2, parts: [[244, 508]], label: "剖面线", lx: 552, ly: 370 },
  { y: 401, c: "#d8dce4", w: 1, parts: [[245, 527]], label: "文本", lx: 552, ly: 403 },
  { y: 433, c: "#00dc00", w: 6, parts: [[245, 548]], label: "图框、标题栏", lx: 562, ly: 437 },
];

function Drawing() {
  return (
    <svg className="absolute inset-0 h-full w-full" aria-label="绘图区">
      <defs>
        <pattern id="grid" x="69" y="81" width="166" height="166" patternUnits="userSpaceOnUse">
          <path d="M33 0v166M66 0v166M100 0v166M133 0v166M0 33h166M0 66h166M0 100h166M0 133h166" stroke="#252c38" strokeWidth="1" transform="translate(.5 .5)" />
          <path d="M.5 0v166M0 .5h166" stroke="#303846" strokeWidth="1" />
        </pattern>
      </defs>
      <rect width="100%" height="100%" fill="url(#grid)" />
      {strokes.map((s) => (
        <g key={s.label}>
          {s.parts.map(([a, b]) => (
            <line key={a} x1={a} x2={b} y1={s.y} y2={s.y} stroke={s.c} strokeWidth={s.w} strokeLinecap={s.w > 5 ? "round" : "butt"} shapeRendering={s.w > 5 ? "auto" : "crispEdges"} />
          ))}
          <text x={s.lx} y={s.ly} fill="#fff" fontSize="12">{s.label}</text>
        </g>
      ))}
      <g shapeRendering="crispEdges" stroke="#e8e8e8" fill="none">
        <path d="M823 24h44M875 24h45M871 0v20M871 28v21" />
        <rect x="867" y="20" width="8" height="8" />
      </g>
    </svg>
  );
}

const layers = [
  ["0", "#fff", "白", "Continu...", "默认", 0],
  ["尺寸标注", "#fff", "白", "Continu...", "0.25...", 0],
  ["粗实线", "#00dc00", "绿", "Continu...", "0.50...", 1],
  ["点画线", "#ff1a00", "红", "CENTER", "0.25...", 0],
  ["剖面线", "#fff", "白", "Continu...", "0.25...", 0],
  ["双细点画线", "#ff8c80", "11", "ACAD_I...", "0.25...", 0],
  ["图框、标...", "#00dc00", "绿", "Continu...", "0.50...", 1],
  ["文本", "#fff", "白", "Continu...", "0.25...", 0],
  ["细实线", "#fff", "白", "Continu...", "0.25...", 0],
  ["虚线", "#fff200", "黄", "ACAD_I...", "0.25...", 0],
];

function LayerTable({ current, onPick }) {
  const head = "border-r-2 border-[#505050] bg-[#666] text-left font-normal overflow-hidden";
  return (
    <table className="w-full table-fixed border-collapse">
      <colgroup>
        <col className="w-[26px]" />
        <col className="w-[113px]" />
        <col className="w-[46px]" />
        <col className="w-[82px]" />
        <col className="w-[28px]" />
        <col className="w-[27px]" />
        <col className="w-[71px]" />
        <col className="w-[96px]" />
        <col className="w-[103px]" />
        <col className="w-[80px]" />
        <col className="w-[28px]" />
        <col />
      </colgroup>
      <thead>
        <tr className="h-[35px] whitespace-nowrap">
          <th className={`${head} pl-[6px]`}>状</th>
          <th className={`${head} pl-[6px]`}>
            <span className="flex items-center justify-between pr-1">名称<Caret w={15} up fill="#aaa" /></span>
          </th>
          <th className={`${head} pl-[6px]`}>开</th>
          <th className={`${head} pl-[6px]`}>冻结</th>
          <th className={`${head} pl-[6px]`}>锁</th>
          <th className={`${head} pl-[5px]`}>打</th>
          <th className={`${head} pl-[5px]`}>颜色</th>
          <th className={`${head} pl-[6px]`}>线型</th>
          <th className={`${head} pl-[6px]`}>线宽</th>
          <th className={`${head} pl-[5px]`}>透明度</th>
          <th className={`${head} pl-[5px]`}>新</th>
          <th className="overflow-hidden bg-[#666] pl-[5px] text-left font-normal">说明</th>
        </tr>
      </thead>
      <tbody>
        {layers.map(([name, color, colorName, type, weight, thick], i) => {
          const on = i === current;
          return (
            <tr key={name} onClick={() => onPick(i)} className={on ? "h-[26px] bg-[#929292] leading-[26px] whitespace-nowrap text-black" : "h-[26px] leading-[26px] whitespace-nowrap text-[#f0f0f0]"}>
              <td className="pl-[2px]"><Icon name={on ? "check" : "layerRow"} s={20} /></td>
              <td className="border-r-2 border-[#505050] pl-[5px]">{name}</td>
              <td className="pl-[11px]"><Icon name="rowBulb" s={22} /></td>
              <td className="pl-[29px]"><Icon name="rowSun" s={22} /></td>
              <td className="pl-[1px]"><Icon name="rowLock" s={23} /></td>
              <td className="pl-[2px]"><Icon name="rowPrint" s={20} /></td>
              <td className="pl-[3px]">
                <span className="flex items-center gap-[5px]">
                  <span className="h-[18px] w-[18px] shrink-0 border-[1px] border-black" style={{ backgroundColor: color }} />
                  {colorName}
                </span>
              </td>
              <td className="pl-[5px]">{type}</td>
              <td className="pl-[1px]">
                <span className="flex items-center gap-[7px]">
                  <span className={thick ? "h-[10px] w-[33px] bg-white" : on ? "h-[2px] w-[33px] bg-black" : "h-[2px] w-[33px] bg-white"} />
                  {weight}
                </span>
              </td>
              <td className="pl-1">0</td>
              <td className="pl-1"><Icon name="rowVp" s={20} /></td>
              <td />
            </tr>
          );
        })}
        <tr className="h-[50px]">
          <td />
          <td className="border-r-2 border-[#505050]" />
          <td colSpan="10" />
        </tr>
      </tbody>
    </table>
  );
}

function ScrollBar({ thumb }) {
  return (
    <div className="flex h-full items-stretch bg-[#f0f0f0]">
      <button aria-label="向左" className="flex w-6 items-center justify-center">
        <svg width="8" height="12" viewBox="0 0 8 12" aria-hidden="true"><path d="M7 1L2 6l5 5" fill="none" stroke="#555" strokeWidth="2.500" /></svg>
      </button>
      <div className="flex-1 py-[1px]"><div className={`h-full bg-[#cdcdcd] ${thumb}`} /></div>
      <button aria-label="向右" className="flex w-6 items-center justify-center">
        <svg width="8" height="12" viewBox="0 0 8 12" aria-hidden="true"><path d="M1 1l5 5-5 5" fill="none" stroke="#555" strokeWidth="2.500" /></svg>
      </button>
    </div>
  );
}

function DoubleChevron() {
  return (
    <svg width="16" height="13" viewBox="0 0 16 13" className="shrink-0" aria-hidden="true">
      <path d="M7 1L2 6l5 5M14 1L9 6l5 5" fill="none" stroke="#bbb" strokeWidth="2" />
    </svg>
  );
}

function LayerPalette() {
  const [current, setCurrent] = useState(7);
  return (
    <div className="absolute top-[49px] right-[145px] flex w-[972px] rounded-[3px] border border-[#3a3a3a] bg-[#535353] text-[#f0f0f0] shadow-lg">
      <div className="flex w-[34px] flex-col items-center gap-[11px] pt-[9px] pb-[5px]">
        <button aria-label="关闭">
          <svg width="13" height="12" viewBox="0 0 13 12" aria-hidden="true"><path d="M1 1l11 10M12 1L1 11" stroke="#ccc" strokeWidth="3" /></svg>
        </button>
        <button aria-label="自动隐藏" className="mt-1">
          <svg width="13" height="14" viewBox="0 0 13 14" aria-hidden="true"><path d="M2 0v14M11 2v10" stroke="#ccc" strokeWidth="2" /><path d="M2 4l4 3-4 3zM12 3L7 7l5 4z" fill="#ccc" /></svg>
        </button>
        <button aria-label="特性" className="mt-1"><Icon name="gear" s={15} /></button>
        <span className="mt-auto rotate-180 leading-5 text-[#b4b4b4] [text-orientation:sideways] [writing-mode:vertical-rl]">图层特性管理器</span>
        <Icon name="stackLines" s={21} />
      </div>
      <div className="mt-1 mr-1 mb-[2px] min-w-0 flex-1 rounded-[5px] border-2 border-[#3e3e3e] bg-[#5c5c5c] pr-[2px] pl-1">
        <div className="flex h-[44px] items-center justify-between">
          <h2 className="pt-[9px] pl-[4px]">当前图层: 文本</h2>
          <label className="flex h-[23px] w-[190px] items-center bg-[#626262] pr-[2px]">
            <input aria-label="搜索图层" placeholder="搜索图层" className="w-0 flex-1 bg-transparent leading-[23px] outline-none placeholder:text-[#ababab]" />
            <svg width="17" height="17" viewBox="0 0 17 17" aria-hidden="true"><path d="M10 10l6 6" stroke="#eee" strokeWidth="3" /><circle cx="6" cy="6" r="6" fill="#f0f0f0" stroke="#444" /></svg>
          </label>
        </div>
        <div className="flex h-[32px] items-center pb-1">
          <button aria-label="新特性过滤器"><Icon name="folderFilter" s={21} /></button>
          <button aria-label="新建组过滤器" className="ml-[10px]"><Icon name="folder" s={21} /></button>
          <span className="mx-[8px] h-6 w-[2px] bg-[#3e3e3e]" />
          <button aria-label="图层状态管理器"><Icon name="layState" s={23} /></button>
          <div className="ml-[86px] flex gap-[10px]">
            <button aria-label="新建图层" className="relative"><Icon name="stackLines" s={21} /><span className="absolute top-[7px] left-[13px] h-[10px] w-[10px] rounded-full border-2 border-[#f07820] bg-[#ffd080]" /></button>
            <button aria-label="新建冻结图层" className="relative"><Icon name="stackLines" s={21} /><svg width="12" height="12" viewBox="0 0 12 12" className="absolute top-[6px] left-[12px]"><path d="M6 0v12M0 6h12M2 2l8 8M10 2l-8 8" stroke="#84c4d4" strokeWidth="2" /></svg></button>
            <button aria-label="删除图层" className="relative"><Icon name="stackLines" s={21} /><svg width="12" height="12" viewBox="0 0 12 12" className="absolute top-[6px] left-[12px]"><path d="M1 1l10 10M11 1L1 11" stroke="#f03828" strokeWidth="3.500" /></svg></button>
            <button aria-label="置为当前" className="relative"><Icon name="stackLines" s={21} /><svg width="14" height="14" viewBox="0 0 24 24" className="absolute top-0 left-[9px]">{art.check}</svg></button>
          </div>
          <div className="mr-[24px] ml-auto flex items-center gap-[12px]">
            <button aria-label="刷新"><Icon name="refresh" s={19} /></button>
            <button aria-label="切换替代"><Icon name="override" s={21} /></button>
            <button aria-label="设置"><Icon name="gear" s={20} /></button>
          </div>
        </div>
        <div className="flex">
          <aside className="relative flex w-[170px] shrink-0 flex-col overflow-hidden border-r-2 border-[#666]">
            <div className="flex h-[34px] items-center justify-between border-b-2 border-[#6a6a6a] pr-2 pb-[2px] pl-[3px]">
              过滤器
              <DoubleChevron />
            </div>
            <div className="relative flex-1 whitespace-nowrap">
              <div className="absolute top-8 left-10 h-4 w-4 border-b border-l border-dotted border-[#222]" />
              <div className="mt-[7px] flex h-[26px] items-center pl-[7px]">
                <span className="flex h-[13px] w-[13px] items-center justify-center bg-white"><span className="h-px w-[9px] bg-black" /></span>
                <span className="w-[10px] border-b border-dotted border-[#222]" />
                <span className="mb-2"><Icon name="stackLines" s={13} /></span>
                <span className="mt-2 -ml-[6px]"><Icon name="check" s={14} /></span>
                <span className="ml-[6px] bg-[#f4f4f4] px-[2px] leading-[25px] text-black">全部</span>
              </div>
              <div className="flex h-[26px] items-center gap-2 pl-[60px]">
                <Icon name="folderFilter" s={20} />
                所有使用的
              </div>
              <span className="absolute top-[110px] left-0 -rotate-[52deg] text-[38px] text-white/5">育设学堂</span>
            </div>
            <div className="mr-[2px] h-[26px] border border-[#ccc]"><ScrollBar thumb="w-[93px]" /></div>
            <label className="flex h-[36px] items-center gap-[5px] pr-2 pb-[2px] pl-1 whitespace-nowrap">
              <input type="checkbox" className="h-[19px] w-[19px] appearance-none border border-[#333] bg-white checked:bg-[#7cbcf0]" />
              <span className="w-[103px] overflow-hidden">反转过滤器(</span>
              <span className="ml-auto"><DoubleChevron /></span>
            </label>
          </aside>
          <div className="ml-[6px] min-w-0 flex-1">
            <LayerTable current={current} onPick={setCurrent} />
            <div className="mt-[7px] h-[26px]"><ScrollBar thumb="w-[68%]" /></div>
          </div>
        </div>
        <p className="pt-6 pb-[6px] pl-[2px] leading-[26px]">全部: 显示了 10 个图层，共 10 个图层</p>
      </div>
      <svg width="20" height="28" viewBox="0 0 20 28" className="absolute top-[85px] left-[438px]" aria-hidden="true">
        <path d="M1 1v22l5-4 4 8 4-2-4-8h7z" fill="#fff" stroke="#222" />
      </svg>
    </div>
  );
}

function ViewCube() {
  return (
    <div className="absolute top-[10px] right-[22px] flex w-[140px] flex-col items-center">
      <svg width="140" height="140" viewBox="0 0 140 140" aria-label="ViewCube">
        <circle cx="70" cy="68" r="51" fill="none" stroke="#4a515d" strokeWidth="10" />
        <rect x="45" y="43" width="50" height="50" fill="#c4c8ca" />
        <rect x="54" y="52" width="31" height="31" fill="#a8b2c0" />
        <g fontSize="18" fill="#b4b8be" textAnchor="middle">
          <text x="70" y="23">北</text>
          <text x="70" y="130">南</text>
          <text x="123" y="75">东</text>
          <text x="17" y="75">西</text>
          <text x="70" y="78" fontSize="28" fill="#4c5c6c">上</text>
        </g>
      </svg>
      <button className="mt-[11px] flex h-[26px] w-[70px] items-center justify-between rounded-[5px] border border-[#8c9096] bg-[#a6a9ae] px-[6px] text-[16px] leading-5 text-[#5c6068]">
        WCS
        <Caret w={9} fill="#c8ccd2" />
      </button>
    </div>
  );
}

function NavBar() {
  return (
    <div className="absolute top-[221px] right-4 flex h-[311px] w-[46px] flex-col items-center rounded-[3px] border border-[#666c76] bg-[#5a606a]/80">
      <svg width="44" height="309" viewBox="0 0 44 309" fill="none" stroke="#3e444e" strokeWidth="2" aria-label="导航栏">
        <circle cx="36" cy="8" r="4" />
        <path d="M6 48V36c0-14 32-14 32 0v12z" />
        <circle cx="22" cy="40" r="9" />
        <path d="M8 132l22 20M6 152l16-18" />
        <circle cx="29" cy="153" r="7" />
        <path d="M34 158l6 7" strokeWidth="4" />
        <path d="M19 175l3 4 3-4M19 232l3 4 3-4" />
        <path d="M22 188v34M17 194l5-7 5 7M17 216l5 7 5-7" />
        <ellipse cx="22" cy="207" rx="16" ry="6" />
        <path d="M5 256h8v8H5zM17 256h8v8h-8zM29 256h8v8h-8zM5 270h24v19H5z" />
        <path d="M13 275l9 5-9 5z" fill="#3e444e" />
        <circle cx="36" cy="300" r="4" />
      </svg>
    </div>
  );
}

function SpeedWidget() {
  return (
    <div className="absolute top-[267px] right-0 flex items-center text-[#dcdfe6]">
      <div className="-mr-8 flex h-[63px] w-[124px] flex-col justify-center rounded-l-full bg-[#1c2030] pl-[15px] text-[16px] leading-8">
        <div className="flex items-center gap-2">
          <svg width="11" height="10" viewBox="0 0 11 10" aria-hidden="true"><path d="M5 10V2M1 5l4-4 4 4" fill="none" stroke="#38a0e8" strokeWidth="2" /></svg>
          <span className="font-semibold">0.1<small className="text-[14px] font-normal text-[#8c909c]">K/s</small></span>
        </div>
        <div className="flex items-center gap-2">
          <svg width="11" height="10" viewBox="0 0 11 10" aria-hidden="true"><path d="M5 0v8M1 5l4 4 4-4" fill="none" stroke="#2cb43c" strokeWidth="2" /></svg>
          <span className="font-semibold">4.5<small className="text-[14px] font-normal text-[#8c909c]">K/s</small></span>
        </div>
      </div>
      <div className="relative flex h-[88px] w-[88px] items-center justify-center rounded-full border-2 border-[#4c5464] bg-[#2c3344] text-[36px]">
        <svg width="84" height="84" viewBox="0 0 84 84" className="absolute inset-0" fill="none" aria-hidden="true">
          <path d="M42 4a38 38 0 0 1 38 38" stroke="#3cc0b4" strokeWidth="3" />
          <path d="M80 42a38 38 0 0 1-20 33" stroke="#8cc868" strokeWidth="3" />
          <path d="M60 75a38 38 0 0 1-34 2" stroke="#d4c848" strokeWidth="3" />
        </svg>
        <span className="font-light">57<small className="text-[16px] font-normal">%</small></span>
      </div>
    </div>
  );
}

function ImeBar() {
  return (
    <div className="absolute right-[77px] bottom-[52px] flex h-[38px] items-center gap-[9px] bg-white pr-[6px] shadow">
      <svg width="44" height="44" viewBox="0 0 44 44" className="-ml-[7px]" aria-label="搜狗输入法">
        <path d="M3 6L33 1c3-1 5 0 6 3l5 30c0 3-1 5-4 6l-28 4c-3 0-5-1-6-4L0 11c0-3 1-5 3-5z" fill="#fb5f1c" />
        <path d="M34 10C20 8 9 11 9 17c1 8 23 4 23 9 0 5-12 6-22 4" fill="none" stroke="#fff" strokeWidth="6" />
      </svg>
      <button className="text-[22px] leading-8 font-bold text-[#1668c4]">英</button>
      <button aria-label="标点" className="mx-1">
        <svg width="16" height="20" viewBox="0 0 16 20" aria-hidden="true"><circle cx="4" cy="5" r="3" fill="#1668c4" /><path d="M11 10h4c1 4-1 7-4 9 1-3 0-4 0-9z" fill="#1668c4" /></svg>
      </button>
      {["smile", "mic", "keyboard", "person", "shirt", "apps"].map((n) => (
        <button key={n} aria-label={n}><Icon name={n} /></button>
      ))}
    </div>
  );
}

function Canvas() {
  return (
    <main className="relative min-h-[600px] flex-1 overflow-hidden bg-[#212630]">
      <Drawing />
      <p className="absolute top-[5px] left-[3px] text-[#e4e4e4]">[−][俯视][二维线框]</p>
      <svg width="120" height="125" className="absolute bottom-0 left-2" aria-label="UCS">
        <path d="M10 31v75h75M4 99h13v14H4z" fill="none" stroke="#e4e4e4" strokeWidth="1.500" />
        <g fontSize="26" fontWeight="300" fill="#e4e4e4">
          <text x="14" y="27">Y</text>
          <text x="92" y="104">X</text>
        </g>
      </svg>
      <ViewCube />
      <NavBar />
      <LayerPalette />
      <div className="absolute top-0 right-0 bottom-0 w-[14px] border-r-[3px] border-[#3c444c] bg-[#b8cde8]" />
      <SpeedWidget />
      <ImeBar />
      <div className="absolute right-1/5 bottom-0 left-1/5">
        <div className="flex flex-col items-start gap-[7px] pb-[3px] pl-[91px] text-[#eee]">
          <span className="w-14 rounded-[3px] bg-[#575a60] pl-1 leading-6 opacity-75">命令 :</span>
          <span className="w-14 rounded-[3px] bg-[#5a5c60] pl-1 leading-6 opacity-85">命令 :</span>
          <span className="w-14 rounded-[3px] bg-[#636464] pl-1 leading-6">命令 :</span>
        </div>
        <div className="flex h-[40px] border-2 border-[#5c5e62] bg-[#bbbdbf]">
          <div className="flex w-[79px] items-center gap-[13px] bg-gradient-to-r from-[#55585e] to-[#404348] pl-[9px]">
            <span className="-mr-1 h-6 border-l-2 border-dotted border-[#999]" />
            <svg width="14" height="13" viewBox="0 0 14 13" aria-label="关闭"><path d="M1 1l12 11M13 1L1 12" stroke="#ddd" strokeWidth="2.500" /></svg>
            <svg width="21" height="20" viewBox="0 0 21 20" aria-label="自定义"><path d="M1 2l5 4 3-4-3-2c5-1 8 3 6 7l9 10-3 3L9 10C4 11 0 8 1 2z" fill="#ccc" /></svg>
          </div>
          <label className="flex flex-1 items-center pl-[6px]">
            <span className="flex h-5 w-[22px] items-center justify-center rounded-[2px] border border-[#76808e] bg-[#b2bac6]">
              <svg width="14" height="11" viewBox="0 0 14 11" aria-hidden="true"><path d="M1 1l4 4-4 4M7 10h6" fill="none" stroke="#334" strokeWidth="1.500" /></svg>
            </span>
            <span className="ml-[5px]"><Caret w={8} fill="#666" /></span>
            <input aria-label="命令" placeholder="键入命令" className="ml-[14px] flex-1 bg-transparent text-[20px] italic outline-none placeholder:text-[#77797c]" />
            <span className="pr-[6px]"><Caret w={11} up fill="#111" /></span>
          </label>
        </div>
      </div>
    </main>
  );
}

const footTab = "h-[26px] [clip-path:polygon(0_0,100%_0,calc(100%-5px)_18%,calc(100%-11px)_88%,calc(100%-16px)_100%,16px_100%,11px_88%,5px_18%)]";

function LayoutTabs() {
  return (
    <div className="flex h-[31px] shrink-0 items-start border-t-2 border-[#5c5c5c] bg-[#393939] pl-[10px] leading-6 text-[#b0b0b0]">
      <button className={`${footTab} w-[82px] bg-gradient-to-b from-[#5a5a5a] to-[#9a9a9a] font-bold text-white`}>模型</button>
      <button className={`${footTab} -ml-[6px] w-[84px] bg-gradient-to-b from-[#484848] to-[#6e6e6e]`}>布局1</button>
      <button className={`${footTab} -ml-[4px] w-[86px] bg-gradient-to-b from-[#484848] to-[#6e6e6e]`}>布局2</button>
      <button aria-label="新建布局" className="ml-[4px] flex h-6 w-8 items-center justify-center rounded-tl-[14px] rounded-tr-[3px] rounded-br-[14px] rounded-bl-[3px] bg-[#585858]">
        <svg width="13" height="13" viewBox="0 0 13 13" aria-hidden="true"><path d="M6 0v13M0 6h13" stroke="#ccc" strokeWidth="3" /></svg>
      </button>
    </div>
  );
}

// w: cell width, on: highlighted, c: width of the drop-down arrow cell, end: divider after it
const statusItems = [
  { n: "grid", w: "w-[37px]", on: true },
  { n: "dots", w: "w-[37px]", c: "w-[21px]", end: true },
  { n: "infer", w: "w-[40px]" },
  { n: "dyn", w: "w-[38px]", on: true },
  { n: "ortho", w: "w-[37px]" },
  { n: "polar", w: "w-[36px]", on: true, c: "w-[21px]" },
  { n: "iso", w: "w-[36px]", c: "w-[20px]", end: true },
  { n: "track", w: "w-[37px]", on: true },
  { n: "osnap", w: "w-[36px]", on: true, c: "w-[21px]", end: true },
  { n: "lwt", w: "w-[38px]", on: true },
  { n: "checker", w: "w-[38px]", on: true },
  { n: "cycle", w: "w-[35px]", end: true },
  { n: "cube3", w: "w-[37px]", c: "w-[21px]", end: true },
  { n: "ucs", w: "w-[38px]", on: true },
  { n: "subobj", w: "w-[34px]", c: "w-[22px]" },
  { n: "gizmo", w: "w-[36px]", on: true, c: "w-[23px]", end: true },
  { n: "annoA", w: "w-[37px]", on: true },
  { n: "annoB", w: "w-[36px]" },
  { n: "annoC", w: "w-[35px]" },
];

const statusTail = [
  { n: "gear", w: "w-[40px]", c: "w-[20px]", end: true },
  { n: "plus", w: "w-[36px]", end: true },
];

const statusRight = [
  { n: "list", w: "w-[37px]", end: true },
  { n: "winLock", w: "w-[40px]", c: "w-[20px]", end: true },
  { n: "shapes", w: "w-[37px]", end: true },
  { n: "gauge", w: "w-[38px]", on: true, end: true },
];

function StatusItem({ item }) {
  return (
    <div className={item.end ? "flex shrink-0 items-center border-r-[3px] border-[#747474]" : "flex shrink-0 items-center"}>
      <button aria-label={item.n} aria-pressed={!!item.on} className={`flex h-full items-center justify-center border-x ${item.w} ${item.on ? "border-[#6a6a6a] bg-[#5c8bc4]" : "border-transparent"}`}>
        <Icon name={item.n} s={22} />
      </button>
      {item.c && <button aria-label="更多" className={`flex h-full items-center justify-center ${item.c}`}><Caret w={10} /></button>}
    </div>
  );
}

function StatusBar() {
  return (
    <footer className="flex h-[38px] shrink-0 items-stretch bg-[#3a3a3a] pl-[58px] text-[#eee]">
      <div className="flex flex-1 items-stretch border-t-[3px] border-l-2 border-[#747474] bg-gradient-to-b from-[#555] to-[#484848]">
        <output className="w-[273px] shrink-0 border-r-[3px] border-[#747474] pr-[6px] text-right text-[17px] leading-9 text-[#b4b4b4]">1859.9753, 952.6006, 0.0000</output>
        <button className="w-[50px] shrink-0 border-r-[3px] border-[#747474] font-bold">模型</button>
        {statusItems.map((i) => <StatusItem key={i.n} item={i} />)}
        <div className="flex shrink-0 items-center border-r-[3px] border-[#747474]">
          <button className="flex w-[111px] items-center justify-center gap-[7px] text-[17px] whitespace-nowrap">1:1 / 100%<Caret w={10} /></button>
        </div>
        {statusTail.map((i) => <StatusItem key={i.n} item={i} />)}
        <label className="flex w-[150px] shrink-0 items-center border-r-[3px] border-[#747474] pr-[6px] pl-[8px]">
          <Icon name="ruler" s={22} />
          <select aria-label="单位" className="ml-[15px] w-0 flex-1 appearance-none font-bold outline-none">
            <option>小数</option>
          </select>
          <Caret w={10} />
        </label>
        {statusRight.map((i) => <StatusItem key={i.n} item={i} />)}
        <button aria-label="图形状态" className="flex w-[48px] shrink-0 items-center justify-center border-r-[3px] border-[#747474]">
          <svg width="34" height="34" viewBox="0 0 34 34" aria-hidden="true">
            <path d="M3 2h19l6 6v22H3z" fill="#5cb2e8" />
            <path d="M22 2v7h7z" fill="#fff" />
            <path d="M3 24c9-5 15-1 19 7H3z" fill="#f8cc40" />
            <path d="M10 3v17M3 11h24M7 8h7v6H7z" stroke="#fff" strokeWidth="1.500" fill="none" />
            <path d="M19 27l3-3 3 4 7-9 2 2-9 12z" fill="#2c9440" />
          </svg>
        </button>
        <button aria-label="全屏" className="flex w-[36px] items-center justify-center"><Icon name="full" s={23} /></button>
        <button aria-label="自定义" className="flex flex-1 items-center justify-center"><Icon name="menu" s={23} /></button>
      </div>
    </footer>
  );
}

function App() {
  return (
    <div className="flex min-h-screen bg-white p-2 font-['Open_Sans','Noto_Sans_CJK_SC',sans-serif] text-[18px] leading-6">
      <div className="flex min-w-0 flex-1 flex-col overflow-hidden bg-[#3a3a3a] shadow-[0_0_6px_2px_rgba(0,0,0,0.45)]">
        <TitleBar />
        <Ribbon />
        <FileTabs />
        <Canvas />
        <LayoutTabs />
        <StatusBar />
      </div>
    </div>
  );
}

export default App;
